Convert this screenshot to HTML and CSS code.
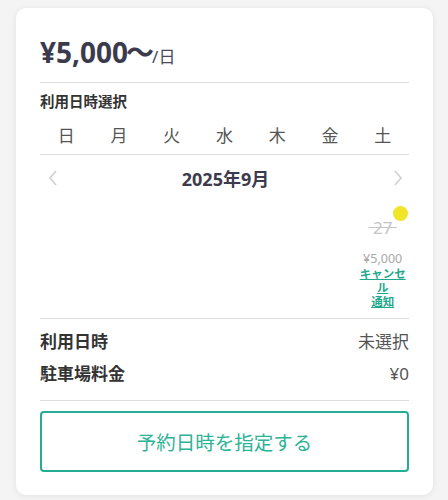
FILE: index.html
```html
<!DOCTYPE html>
<html lang="ja">
<head>
<meta charset="utf-8">
<link rel="stylesheet" href="styles.css">
</head>
<body>
<div class="card">
  <div class="price"><span class="amount">¥5,000<span class="tilde">～</span></span><span class="unit">/日</span></div>
  <hr class="rule">
  <div class="section-title">利用日時選択</div>
  <div class="weekdays">
    <span>日</span><span>月</span><span>火</span><span>水</span><span>木</span><span>金</span><span>土</span>
  </div>
  <hr class="rule rule-week">
  <div class="month-nav">
    <svg class="chev" viewBox="0 0 10 16" width="10" height="16"><path d="M8 1 L2 8 L8 15" fill="none" stroke="#d0d0d0" stroke-width="1.6"/></svg>
    <span class="month">2025年9月</span>
    <svg class="chev" viewBox="0 0 10 16" width="10" height="16"><path d="M2 1 L8 8 L2 15" fill="none" stroke="#d0d0d0" stroke-width="1.6"/></svg>
  </div>
  <div class="days">
    <div class="day"></div><div class="day"></div><div class="day"></div><div class="day"></div><div class="day"></div><div class="day"></div>
    <div class="day filled">
      <span class="dot"></span>
      <span class="num">&nbsp;27&nbsp;</span>
      <span class="dprice">¥5,000</span>
      <a class="notify">キャンセル<br>通知</a>
    </div>
  </div>
  <hr class="rule rule-sum">
  <div class="summary">
    <div class="row"><span class="label">利用日時</span><span class="value">未選択</span></div>
    <div class="row"><span class="label">駐車場料金</span><span class="value">¥0</span></div>
  </div>
  <hr class="rule rule-btn">
  <button class="cta">予約日時を指定する</button>
</div>
</body>
</html>
```

FILE: styles.css
```css
* { box-sizing: border-box; }
html, body { margin: 0; }
body {
  background: #f4f4f5;
  font-family: "Noto Sans", "Noto Sans CJK JP", sans-serif;
  color: #3b3b4d;
  padding: 8px 15px 6px 16px;
}
.card {
  background: #fff;
  border-radius: 10px;
  box-shadow: 0 1px 6px rgba(0,0,0,0.08);
  padding: 25px 24px 23px;
}
.price {
  display: flex;
  align-items: baseline;
  line-height: 36px;
}
.amount { font-size: 28px; font-weight: 700; color: #3b3b4d; }
.tilde { font-family: "Noto Sans CJK JP", sans-serif; font-weight: 700; margin-left: -2px; }
.unit { font-size: 17px; color: #4a4a5a; margin-left: -2px; }
.rule {
  border: 0;
  border-top: 1px solid #dcdcdc;
  margin: 7px 0 0;
}
.section-title {
  font-size: 14.5px;
  font-weight: 700;
  margin-top: 8px;
  line-height: 20px;
  color: #333;
}
.weekdays {
  display: grid;
  grid-template-columns: repeat(7, 1fr);
  text-align: center;
  font-size: 17px;
  color: #555;
  margin-top: 10px;
  line-height: 30px;
}
.rule-week { margin-top: 3px; }
.month-nav {
  display: flex;
  justify-content: space-between;
  align-items: center;
  padding: 0 6px 0 8px;
  margin-top: 11px;
  height: 24px;
}
.month { font-size: 18px; font-weight: 700; color: #3b3b4d; }
.days {
  display: grid;
  grid-template-columns: repeat(7, 1fr);
  margin-top: 16px;
}
.day {
  position: relative;
  display: flex;
  flex-direction: column;
  align-items: center;
  padding: 12px 3px 0;
  text-align: center;
}
.dot {
  position: absolute;
  top: 0;
  right: 1px;
  width: 15px;
  height: 15px;
  border-radius: 50%;
  background: #f1e52a;
}
.num {
  font-size: 17px;
  line-height: 20px;
  color: #c4c4c4;
  text-decoration: line-through;
  white-space: nowrap;
}
.dprice {
  font-size: 12.5px;
  color: #a8a8a8;
  margin-top: 13px;
  line-height: 16px;
}
.notify {
  display: block;
  font-size: 11.5px;
  font-weight: 700;
  color: #1fa88d;
  text-decoration: underline;
  line-height: 14px;
  width: 46px;
  word-break: break-all;
}
.rule-sum { margin-top: 9px; }
.summary {
  display: flex;
  flex-direction: column;
  gap: 8px;
  margin-top: 11px;
}
.row {
  display: flex;
  justify-content: space-between;
  align-items: center;
  font-size: 17px;
  line-height: 24px;
}
.label { font-weight: 700; color: #333; }
.value { color: #555; }
.rule-btn { margin-top: 14px; }
.cta {
  display: block;
  width: 100%;
  height: 61px;
  margin-top: 10px;
  background: #fff;
  border: 2px solid #24ad92;
  border-radius: 4px;
  color: #2db396;
  font-family: inherit;
  font-size: 19.5px;
}
```
